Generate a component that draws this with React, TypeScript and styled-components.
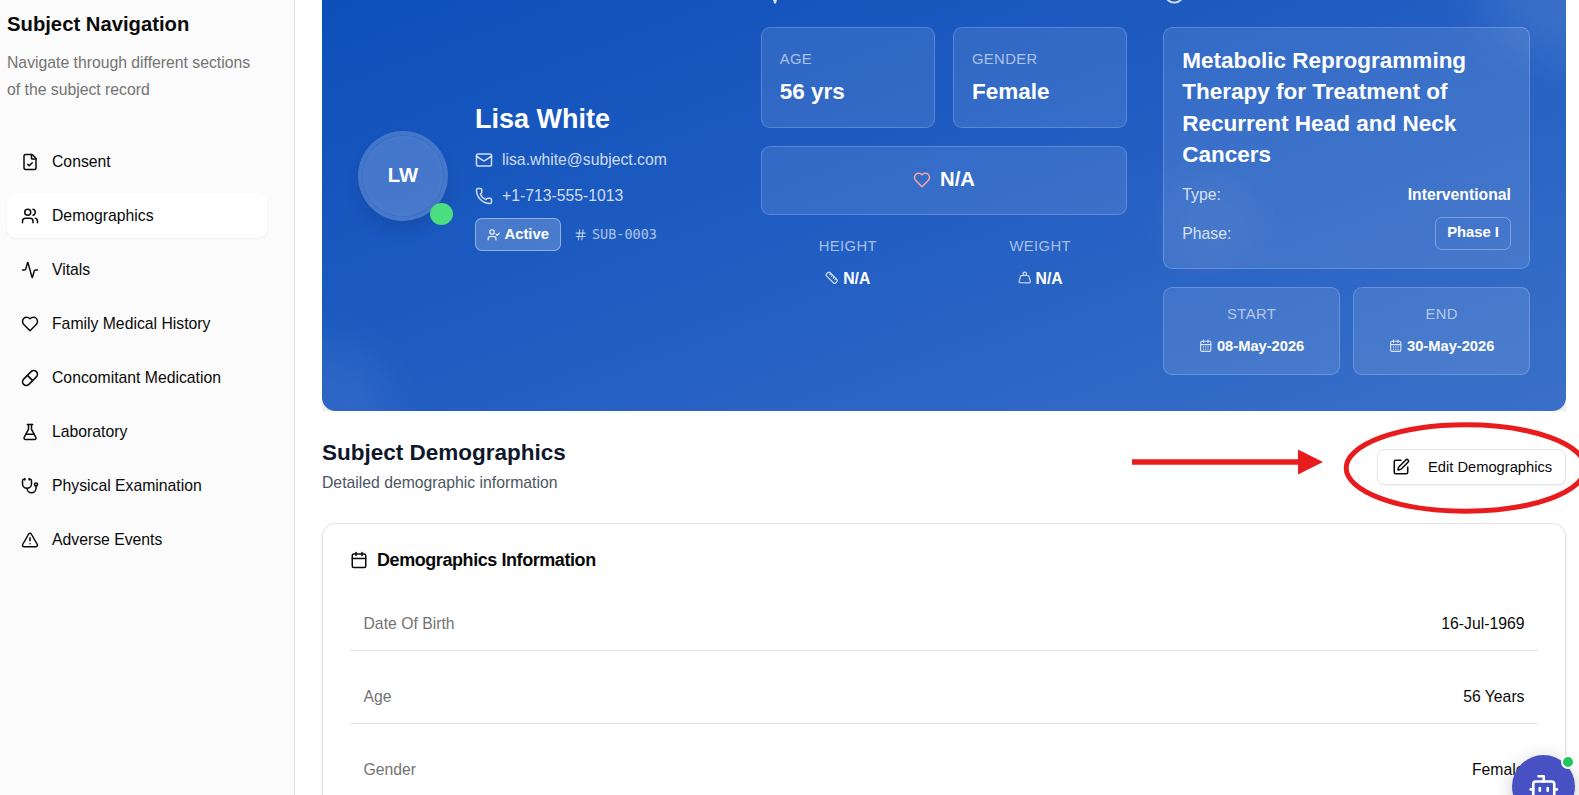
import React from 'react';
import styled, { createGlobalStyle, css } from 'styled-components';
import {
  Activity, Bot, Calendar, CalendarDays, Circle, FileCheck, FlaskConical, Hash,
  Mail, Phone, Pill, Ruler, SquarePen, Stethoscope, TriangleAlert, UserCheck, Users, Weight,
} from 'lucide-react';

const GlobalStyle = createGlobalStyle`
  *, *::before, *::after { box-sizing: border-box; }
  body {
    margin: 0;
    background: #fff;
    color: #0a0a0a;
    font-family: "Liberation Sans", Arial, sans-serif;
    font-size: 15.75px;
    line-height: 27px;
    overflow: hidden;
  }
  svg { flex-shrink: 0; display: block; }
`;

const Page = styled.div`
  position: relative;
  display: flex;
  width: 100%;
  height: 100vh;
  overflow: hidden;
`;

/* ---------- sidebar ---------- */
const Sidebar = styled.aside`
  flex: 0 0 295px;
  padding: 10px 27px 0 7px;
  background: #fbfbfb;
  border-right: 1px solid #e2e2e2;
`;
const SidebarTitle = styled.h2`
  margin: 0 0 11px;
  font-size: 20.25px;
  line-height: 28px;
  font-weight: 700;
`;
const SidebarText = styled.p`
  margin: 0 0 36px;
  color: #737373;
  white-space: nowrap;
`;
const NavList = styled.nav`
  display: flex;
  flex-direction: column;
  gap: 9px;
`;
const NavItem = styled.a<{ $active?: boolean }>`
  display: flex;
  align-items: center;
  gap: 13px;
  height: 45px;
  padding: 0 14px;
  border-radius: 9px;
  ${(p) => p.$active && css`
    background: #fff;
    box-shadow: 0 1px 2px rgba(0, 0, 0, 0.06);
  `}
`;

/* ---------- main ---------- */
const Main = styled.main`
  flex: 1;
  min-width: 0;
  padding: 0 13px 0 27px;
`;
const HeroBack = styled.div`
  margin-top: -59px;
  background: #eee;
`;
const Hero = styled.section`
  position: relative;
  height: 470px;
  padding: 36px;
  border-radius: 0 0 13.5px 13.5px;
  overflow: hidden;
  color: #fff;
  background: linear-gradient(to bottom right, #0a4db8 0%, #205dc2 50%, #3a70c8 100%);
`;
const Glow = styled.div<{ $x: number; $y: number; $size: number; $alpha: number; $blur: number }>`
  position: absolute;
  left: ${(p) => p.$x}px;
  top: ${(p) => p.$y}px;
  width: ${(p) => p.$size}px;
  height: ${(p) => p.$size}px;
  border-radius: 50%;
  background: rgba(255, 255, 255, ${(p) => p.$alpha});
  filter: blur(${(p) => p.$blur}px);
`;
const HeroGrid = styled.div`
  position: relative;
  display: grid;
  grid-template-columns: repeat(3, minmax(0, 1fr));
  gap: 36px;
  height: 100%;
`;
const Profile = styled.div`
  display: flex;
  align-items: center;
  gap: 27px;
`;
const AvatarWrap = styled.div`
  position: relative;
  flex-shrink: 0;
`;
const Avatar = styled.div`
  display: flex;
  align-items: center;
  justify-content: center;
  width: 90px;
  height: 90px;
  padding-bottom: 2px;
  border-radius: 50%;
  background: rgba(255, 255, 255, 0.2);
  background-clip: padding-box;
  border: 4px solid rgba(255, 255, 255, 0.2);
  box-shadow: 0 10px 18px -3px rgba(0, 0, 0, 0.12), inset 0 0 0 0.8px rgba(13, 77, 184, 0.28),
    inset 0 0 8px rgba(255, 255, 255, 0.06);
  font-size: 20.25px;
  font-weight: 700;
`;
const OnlineDot = styled.span`
  position: absolute;
  right: -5px;
  bottom: -4px;
  width: 23px;
  height: 22px;
  border-radius: 50%;
  background: #4ade80;
`;
const ProfileText = styled.div`
  display: flex;
  flex-direction: column;
  gap: 9px;
`;
const Name = styled.h1`
  margin: 0;
  font-size: 27px;
  line-height: 36px;
  font-weight: 700;
`;
const ContactLine = styled.div`
  display: flex;
  align-items: center;
  gap: 9px;
  color: rgba(255, 255, 255, 0.8);
`;
const StatusLine = styled.div`
  display: flex;
  align-items: center;
  gap: 13.5px;
`;
const Badge = styled.span<{ $filled?: boolean }>`
  display: inline-flex;
  align-items: center;
  gap: 4px;
  height: 33px;
  padding: 0 11px 1px;
  border: 1px solid rgba(255, 255, 255, ${(p) => (p.$filled ? 0.4 : 0.3)});
  border-radius: 6.75px;
  background: ${(p) => (p.$filled ? 'rgba(255, 255, 255, 0.2)' : 'transparent')};
  font-size: 14.8px;
  font-weight: 700;
`;
const BadgeIcon = styled.span`
  padding-top: 2px;
`;
const SubjectId = styled.span`
  display: flex;
  align-items: center;
  gap: 4px;
  color: rgba(255, 255, 255, 0.65);
  font-family: "DejaVu Sans Mono", monospace;
  font-size: 13.5px;
`;

const Column = styled.div`
  display: flex;
  flex-direction: column;
  gap: 18px;
`;
const ColumnHeader = styled.header`
  display: flex;
  align-items: center;
  height: 32px;
  color: rgba(255, 255, 255, 0.85);
`;
const Pair = styled.div<{ $gap?: number }>`
  display: grid;
  grid-template-columns: 1fr 1fr;
  gap: ${(p) => p.$gap ?? 18}px;
`;
const Glass = styled.div<{ $pad?: string; $center?: boolean }>`
  padding: ${(p) => p.$pad ?? '18px'};
  border: 1px solid rgba(255, 255, 255, 0.2);
  border-radius: 9px;
  background: rgba(255, 255, 255, 0.1);
  ${(p) => p.$center && css`text-align: center;`}
`;
const Caption = styled.div`
  color: rgba(255, 255, 255, 0.6);
  font-size: 14.8px;
  letter-spacing: 0.37px;
`;
const BigValue = styled.div`
  padding-top: 2px;
  font-size: 22.5px;
  line-height: 34px;
  font-weight: 700;
`;
const HeartRate = styled.div`
  display: flex;
  align-items: center;
  justify-content: center;
  gap: 9px;
  height: 31px;
  padding-bottom: 2px;
  font-size: 20.25px;
  font-weight: 700;
  svg { position: relative; top: 0.5px; }
`;
const Measure = styled.div`
  text-align: center;
`;
const IconValue = styled.div<{ $small?: boolean }>`
  display: flex;
  align-items: center;
  justify-content: center;
  gap: 4.5px;
  margin-top: 4.5px;
  font-weight: 700;
  font-size: ${(p) => (p.$small ? '14.7px' : '15.75px')};
  svg { opacity: 0.8; }
`;
const StudyTitle = styled.h3`
  margin: -1px 0 10px;
  font-size: 22.5px;
  line-height: 31.4px;
  font-weight: 700;
`;
const StudyRow = styled.div`
  display: flex;
  align-items: center;
  justify-content: space-between;
  & + & { margin-top: 9px; }
`;
const StudyLabel = styled.span`
  color: rgba(255, 255, 255, 0.8);
`;

/* ---------- section heading ---------- */
const SectionHead = styled.div`
  display: flex;
  align-items: center;
  justify-content: space-between;
  height: 58px;
  margin: 27px 0;
`;
const SectionTitle = styled.h2`
  margin: -1px 0 1px;
  color: #0f172a;
  font-size: 22.5px;
  line-height: 31px;
  font-weight: 700;
`;
const SectionText = styled.p`
  margin: 0;
  color: #4b5563;
`;
const EditButton = styled.button`
  display: flex;
  align-items: center;
  gap: 18px;
  width: 189px;
  height: 36px;
  padding: 0 0 1px 14px;
  border: 1px solid #e5e5e5;
  border-radius: 7px;
  background: #fff;
  box-shadow: 0 1px 2px rgba(0, 0, 0, 0.05);
  color: #0a0a0a;
  font: 14.7px "Liberation Sans", Arial, sans-serif;
  white-space: nowrap;
`;

/* ---------- information card ---------- */
const InfoCard = styled.section`
  height: 400px;
  padding: 27px;
  border: 1px solid #e5e5e5;
  border-radius: 13.5px;
  background: #fff;
  box-shadow: 0 1px 3px rgba(0, 0, 0, 0.1);
`;
const InfoTitle = styled.h3`
  display: flex;
  align-items: center;
  gap: 9px;
  margin: 0 0 27px;
  font-size: 18px;
  line-height: 18px;
  font-weight: 700;
  letter-spacing: -0.43px;
`;
const InfoRow = styled.div`
  display: flex;
  justify-content: space-between;
  padding: 14px 13.5px 13px;
  border-bottom: 1px solid #e5e5e5;
  margin-bottom: 18px;
`;
const InfoLabel = styled.span`
  color: #737373;
`;

/* ---------- overlays ---------- */
const Markup = styled.svg`
  position: absolute;
  right: 0;
  top: 415px;
  pointer-events: none;
`;
const ChatButton = styled.button`
  position: absolute;
  right: 4px;
  top: 755px;
  display: flex;
  align-items: center;
  justify-content: center;
  width: 63px;
  height: 63px;
  padding: 0;
  border: 0;
  border-radius: 50%;
  background: #4751c4;
  color: #fff;
  box-shadow: 0 4px 18px rgba(0, 0, 0, 0.22);
`;
const ChatDot = styled.span`
  position: absolute;
  top: 0;
  right: 0;
  width: 14px;
  height: 14px;
  border: 2px solid #fff;
  border-radius: 50%;
  background: #22c55e;
`;

function Heart({ size = 18, color = 'currentColor' }: { size?: number; color?: string }) {
  return (
    <svg width={size} height={size} viewBox="0 0 24 24" fill="none" stroke={color} strokeWidth="2" strokeLinecap="round" strokeLinejoin="round">
      <path d="M19 14c1.49-1.46 3-3.21 3-5.5A5.5 5.5 0 0 0 16.5 3c-1.76 0-3 .5-4.5 2-1.5-1.5-2.74-2-4.5-2A5.5 5.5 0 0 0 2 8.5c0 2.3 1.5 4.05 3 5.5l7 7Z" />
    </svg>
  );
}

const nav = [
  { label: 'Consent', Icon: FileCheck },
  { label: 'Demographics', Icon: Users, active: true },
  { label: 'Vitals', Icon: Activity },
  { label: 'Family Medical History', Icon: Heart },
  { label: 'Concomitant Medication', Icon: Pill },
  { label: 'Laboratory', Icon: FlaskConical },
  { label: 'Physical Examination', Icon: Stethoscope },
  { label: 'Adverse Events', Icon: TriangleAlert },
];

const info = [
  ['Date Of Birth', '16-Jul-1969'],
  ['Age', '56 Years'],
  ['Gender', 'Female'],
];

export default function App() {
  return (
    <Page>
      <GlobalStyle />
      <Sidebar>
        <SidebarTitle>Subject Navigation</SidebarTitle>
        <SidebarText>
          Navigate through different sections
          <br />
          of the subject record
        </SidebarText>
        <NavList>
          {nav.map(({ label, Icon, active }) => (
            <NavItem key={label} $active={active}>
              <Icon size={18} />
              {label}
            </NavItem>
          ))}
        </NavList>
      </Sidebar>

      <Main>
        <HeroBack>
          <Hero>
            <Glow $x={1145} $y={-110} $size={230} $alpha={0.1} $blur={28} />
            <Glow $x={-80} $y={395} $size={150} $alpha={0.06} $blur={22} />
            <Glow $x={838} $y={228} $size={100} $alpha={0.04} $blur={16} />
            <HeroGrid>
              <Profile>
                <AvatarWrap>
                  <Avatar>LW</Avatar>
                  <OnlineDot />
                </AvatarWrap>
                <ProfileText>
                  <Name>Lisa White</Name>
                  <ContactLine><Mail size={18} />lisa.white@subject.com</ContactLine>
                  <ContactLine><Phone size={18} />+1-713-555-1013</ContactLine>
                  <StatusLine>
                    <Badge $filled>
                      <BadgeIcon><UserCheck size={13.5} /></BadgeIcon>
                      Active
                    </Badge>
                    <SubjectId><Hash size={13.5} />SUB-0003</SubjectId>
                  </StatusLine>
                </ProfileText>
              </Profile>

              <Column>
                <ColumnHeader><Activity size={22.5} /></ColumnHeader>
                <Pair>
                  <Glass><Caption>AGE</Caption><BigValue>56 yrs</BigValue></Glass>
                  <Glass><Caption>GENDER</Caption><BigValue>Female</BigValue></Glass>
                </Pair>
                <Glass>
                  <HeartRate><Heart size={18} color="#fca5a5" />N/A</HeartRate>
                </Glass>
                <Pair>
                  <Measure>
                    <Caption>HEIGHT</Caption>
                    <IconValue><Ruler size={13.5} />N/A</IconValue>
                  </Measure>
                  <Measure>
                    <Caption>WEIGHT</Caption>
                    <IconValue><Weight size={13.5} />N/A</IconValue>
                  </Measure>
                </Pair>
              </Column>

              <Column>
                <ColumnHeader><Circle size={22.5} /></ColumnHeader>
                <Glass>
                  <StudyTitle>Metabolic Reprogramming Therapy for Treatment of Recurrent Head and Neck Cancers</StudyTitle>
                  <StudyRow><StudyLabel>Type:</StudyLabel><b>Interventional</b></StudyRow>
                  <StudyRow><StudyLabel>Phase:</StudyLabel><Badge>Phase I</Badge></StudyRow>
                </Glass>
                <Pair $gap={13.5}>
                  <Glass $center $pad="13.5px 13.5px 14.5px">
                    <Caption>START</Caption>
                    <IconValue $small><CalendarDays size={13.5} />08-May-2026</IconValue>
                  </Glass>
                  <Glass $center $pad="13.5px 13.5px 14.5px">
                    <Caption>END</Caption>
                    <IconValue $small><CalendarDays size={13.5} />30-May-2026</IconValue>
                  </Glass>
                </Pair>
              </Column>
            </HeroGrid>
          </Hero>
        </HeroBack>

        <SectionHead>
          <div>
            <SectionTitle>Subject Demographics</SectionTitle>
            <SectionText>Detailed demographic information</SectionText>
          </div>
          <EditButton><SquarePen size={18} />Edit Demographics</EditButton>
        </SectionHead>

        <InfoCard>
          <InfoTitle><Calendar size={18} />Demographics Information</InfoTitle>
          {info.map(([label, value]) => (
            <InfoRow key={label}><InfoLabel>{label}</InfoLabel><span>{value}</span></InfoRow>
          ))}
        </InfoCard>
      </Main>

      <Markup width="459" height="105" viewBox="1120 415 459 105">
        <path d="M1132 462h168" stroke="#e81c1c" strokeWidth="5.4" />
        <path d="M1298 449.5 1323 462 1298 474.5z" fill="#e81c1c" />
        <ellipse cx="1465.7" cy="468" rx="119.5" ry="43.2" fill="none" stroke="#e81c1c" strokeWidth="5" />
      </Markup>
      <ChatButton aria-label="Assistant"><Bot size={31.5} /><ChatDot /></ChatButton>
    </Page>
  );
}
